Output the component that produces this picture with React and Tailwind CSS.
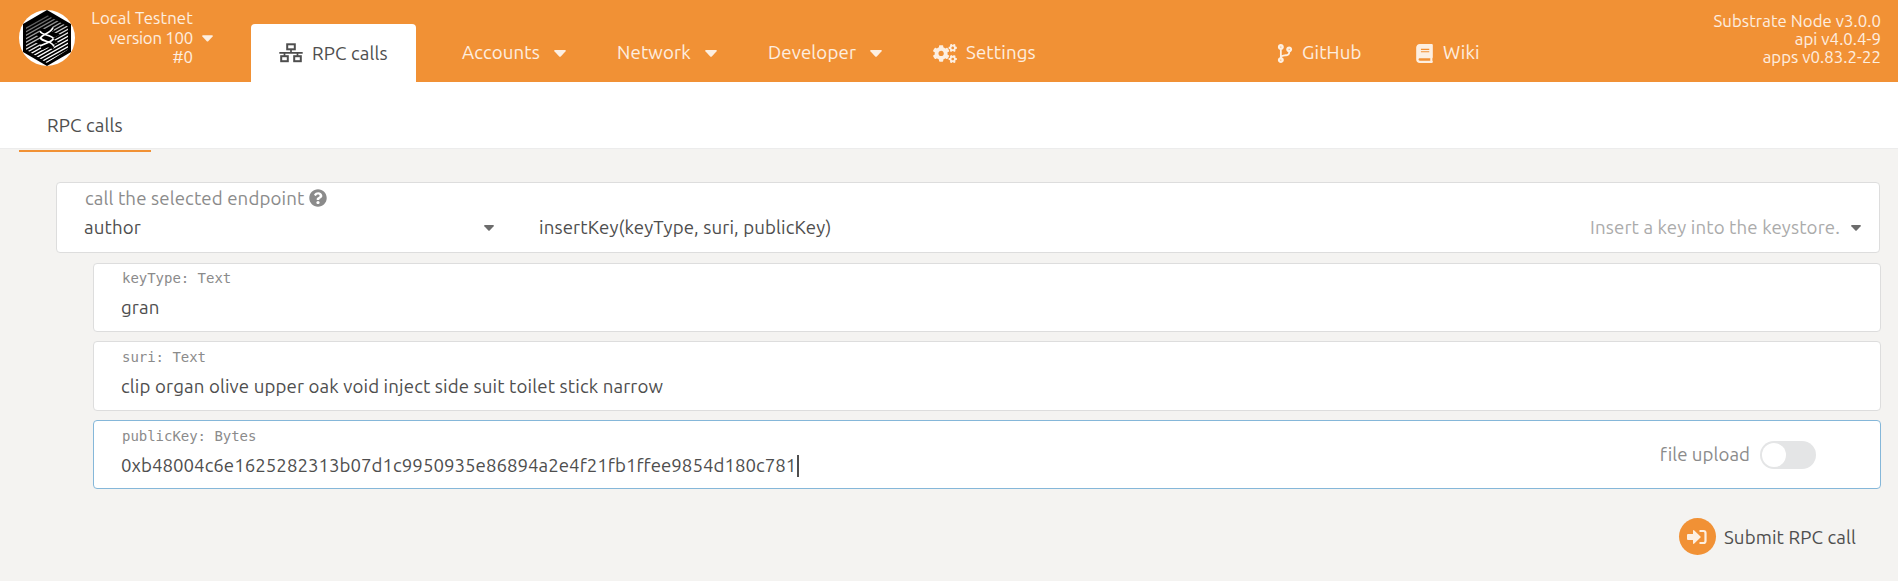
import React from "react";
import { FaCogs, FaCodeBranch, FaBook, FaQuestionCircle } from "react-icons/fa";

function Caret({ className = "" }) {
  return (
    <svg viewBox="0 0 12 7" className={`block shrink-0 fill-current ${className}`}>
      <path d="M1 0h10q1.3.3.6 1.3L6.8 6.4q-.8.8-1.6 0L.4 1.3Q-.3.3 1 0z" />
    </svg>
  );
}

function SitemapIcon() {
  return (
    <svg viewBox="0 0 24 20" className="block h-5 w-6" fill="none" stroke="currentColor" strokeWidth="2">
      <rect x="8.2" y="1.3" width="7.6" height="5" />
      <rect x="2.2" y="13.2" width="6.6" height="5" />
      <rect x="15.2" y="13.2" width="6.6" height="5" />
      <path d="M12 6v4M.3 9.8h23.4M5.5 10v3M18.5 10v3" strokeWidth="1.7" />
    </svg>
  );
}

function Logo() {
  const lines = [-25, -21.5, -18, -14.5, -11, -7.5, -4, -0.5, 3, 6.5, 10, 13.5, 17, 20.5, 24];
  return (
    <svg viewBox="0 0 56 56" className="block size-14">
      <defs>
        <clipPath id="hex">
          <path d="M28 5 49 16.800V39.500L28 53 7 39.500V16.800z" />
        </clipPath>
        <linearGradient id="fade" gradientUnits="userSpaceOnUse" x1="18" y1="4" x2="32" y2="34">
          <stop offset="0.1" stopColor="#444" />
          <stop offset="1" stopColor="#fff" />
        </linearGradient>
      </defs>
      <circle cx="28" cy="28" r="28" fill="#fff" />
      <path d="M28 0 52 14V42L28 56 4 42V14z" fill="#000" />
      <g clipPath="url(#hex)" stroke="url(#fade)" strokeWidth="1.3">
        {lines.map((y) => (
          <path key={y} d={`M5 ${28 + y + 13}L51 ${28 + y - 13}`} />
        ))}
      </g>
      <path d="M21 20l14 5-13 7 13 5M34 18l-12 7 12 7-12 6" stroke="#000" strokeWidth="5" fill="none" />
      <path
        d="M21 21q1 2.500 6.500 4t7 3.500M34 17.500q-1.500 3.500-6.500 6t-6 4.500q1 2 6.500 3.500t7 5M34.500 29q-1.500 2-6.500 4t-7 3"
        stroke="#fff"
        strokeWidth="1.800"
        fill="none"
      />
    </svg>
  );
}

function NavItem({ label, width, icon, caret }) {
  return (
    <div className={`flex h-7 shrink-0 items-center ${width}`}>
      {icon}
      <span>{label}</span>
      {caret && <Caret className="ml-3.5 h-[7px] w-3" />}
    </div>
  );
}

function Param({ label, value, className = "", focused, children }) {
  return (
    <div
      className={`flex rounded border bg-white pr-16 pl-[27px] ${focused ? "border-[#85b7d9]" : "border-[#dddddd]"} ${className}`}
    >
      <div className="flex-1">
        <div className="pl-px font-['DejaVu_Sans_Mono',monospace] text-[14px] leading-5 tracking-[-0.03px] text-[#8b8b8b]">
          {label}
        </div>
        <div className="mt-[7px] flex h-[26px] items-center">
          <span className={focused ? "tracking-[0.02px]" : ""}>{value}</span>
          {focused && <span className="ml-px h-[22px] w-0.5 bg-[#4e4e4e]" />}
        </div>
      </div>
      {children}
    </div>
  );
}

export default function App() {
  return (
    <div className="h-[581px] w-[1898px] overflow-hidden bg-[#f4f3f1] font-['Ubuntu','Noto_Sans',sans-serif] text-[18.67px] leading-[26px] tracking-[0.13px] text-[#4e4e4e]">
      <header className="flex h-[82px] bg-[#f19135] text-white/85">
        <div className="pt-2.5 pl-[19px]">
          <Logo />
        </div>
        <div className="w-[118px] pt-[8px] text-right text-[16.8px] leading-[19.6px]">
          <div>Local Testnet</div>
          <div className="tracking-[-0.25px]">version 100</div>
          <div className="tracking-normal">#0</div>
        </div>
        <Caret className="mt-[35px] ml-[9px] h-[7px] w-[11px]" />
        <div className="mt-6 ml-[38px] flex h-[58px] w-[165px] items-center rounded-t bg-white pl-7 text-[#4e4e4e]">
          <SitemapIcon />
          <span className="mt-px ml-[9px]">RPC calls</span>
        </div>
        <nav className="mt-[39px] ml-[46px] flex">
          <NavItem label="Accounts" width="w-[155px]" caret />
          <NavItem label="Network" width="w-[151px]" caret />
          <NavItem label="Developer" width="w-[165px]" caret />
          <NavItem label="Settings" width="w-[344px]" icon={<FaCogs className="mr-[9px] h-[19px] w-6" />} />
          <NavItem label="GitHub" width="w-[139px]" icon={<FaCodeBranch className="mr-[9px] h-[19px] w-4" />} />
          <NavItem label="Wiki" width="w-20" icon={<FaBook className="mr-2.5 h-[19px] w-[17px]" />} />
        </nav>
        <div className="ml-auto pt-3 pr-[17px] text-right text-[16.8px] leading-[18px] tracking-[0.06px]">
          <div>Substrate Node v3.0.0</div>
          <div>api v4.0.4-9</div>
          <div>apps v0.83.2-22</div>
        </div>
      </header>

      <div className="flex h-[67px] border-b border-[#ececec] bg-white pl-[19px]">
        <div className="h-[70px] w-[132px] border-b-2 border-[#f19135] pt-[31px] pl-7">RPC calls</div>
      </div>

      <main className="pt-[33px] pr-[17px] pl-14">
        <section className="mr-px h-[71px] rounded border border-[#dddddd] bg-white px-[27px] pt-1">
          <div className="flex h-6 items-center pl-px text-[#8b8b8b]">
            <span>call the selected endpoint</span>
            <FaQuestionCircle className="mb-[3px] ml-[5px] size-[18px]" />
          </div>
          <div className="mt-1 flex h-[26px] items-center">
            <span className="w-[400px]">author</span>
            <Caret className="h-1.5 w-2.5 text-[#6c6c6c]" />
            <span className="ml-[45px]">insertKey(keyType, suri, publicKey)</span>
            <span className="ml-auto text-[#ababab]">Insert a key into the keystore.</span>
            <Caret className="mr-[-9px] ml-[11px] h-1.5 w-2.5 text-[#6c6c6c]" />
          </div>
        </section>

        <div className="mt-2.5 flex flex-col pl-[37px]">
          <Param label="keyType: Text" value="gran" className="h-[69px] pt-1" />
          <Param
            label="suri: Text"
            value="clip organ olive upper oak void inject side suit toilet stick narrow"
            className="mt-[9px] h-[70px] pt-[5px]"
          />
          <Param
            label="publicKey: Bytes"
            value="0xb48004c6e1625282313b07d1c9950935e86894a2e4f21fb1ffee9854d180c781"
            className="mt-[9px] h-[69px] pt-[5px]"
            focused
          >
            <div className="-mt-[5px] flex h-[67px] items-center">
              <span className="text-[#8b8b8b] tracking-[0.05px]">file upload</span>
              <span className="ml-2.5 flex h-7 w-14 items-center rounded-full bg-[#e4e5e6] pl-0.5">
                <span className="size-6 rounded-full bg-white" />
              </span>
            </div>
          </Param>
        </div>

        <div className="mt-[29px] flex items-center justify-end pr-[25px]">
          <span className="flex size-[37px] items-center justify-center rounded-full bg-[#f19135] text-white/85">
            <svg viewBox="0 0 20 16" className="h-4 w-5">
              <path d="M0 6q0-1 1-1h5V2q0-1.600 1.300-.6l6.200 6q.6.6 0 1.200l-6.200 6Q6 15.600 6 14v-3H1q-1 0-1-1z" fill="currentColor" />
              <path d="M12.500 2h4q2 0 2 2v8q0 2-2 2h-4" fill="none" stroke="currentColor" strokeWidth="2.200" />
            </svg>
          </span>
          <span className="mt-0.5 ml-2">Submit RPC call</span>
        </div>
      </main>
    </div>
  );
}
